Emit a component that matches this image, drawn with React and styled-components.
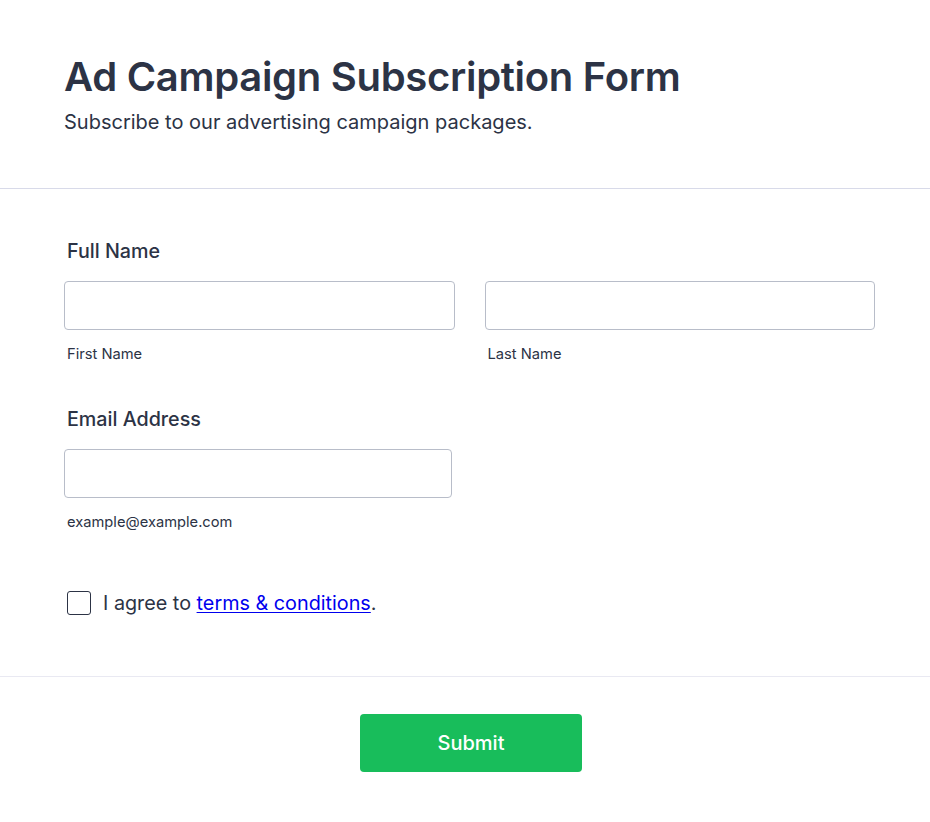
import React from "react";
import styled, { createGlobalStyle } from "styled-components";

const GlobalStyle = createGlobalStyle`
  * { box-sizing: border-box; }
  body {
    margin: 0;
    background: #fff;
    font-family: Inter, "Noto Sans", sans-serif;
    color: #2c3345;
  }
`;

const Page = styled.form`
  width: 930px;
  background: #fff;
`;

const Header = styled.header`
  padding: 53px 64px 54px;
  border-bottom: 1px solid #d8dae9;
`;

const Title = styled.h1`
  margin: 0;
  font-size: 40px;
  line-height: 48px;
  font-weight: 600;
  letter-spacing: -0.3px;
`;

const Subtitle = styled.p`
  margin: 9px 0 0;
  font-size: 20px;
  line-height: 24px;
  font-weight: 400;
`;

const Body = styled.section`
  padding: 50px 55px 61px 64px;
  border-bottom: 1px solid #e9e9f2;
`;

const Field = styled.div`
  margin-bottom: ${({ $gap }) => $gap || 0}px;
`;

const Label = styled.label`
  display: block;
  padding-left: 3px;
  font-size: 19.7px;
  line-height: 24px;
  font-weight: 500;
  margin-bottom: 18px;
`;

const Row = styled.div`
  display: grid;
  grid-template-columns: 1fr 1fr;
  gap: 30px;
`;

const Column = styled.div`
  width: ${({ $width }) => ($width ? `${$width}px` : "auto")};
`;

const Input = styled.input`
  display: block;
  width: 100%;
  height: 49px;
  border: 1px solid #b8bdc9;
  border-radius: 4px;
  padding: 0 12px;
  font: inherit;
  font-size: 16px;
  color: #2c3345;
  background: #fff;
  outline: none;
`;

const Sublabel = styled.span`
  display: block;
  margin-top: 14px;
  padding-left: 3px;
  font-size: 14.7px;
  line-height: 20px;
  color: #2c3345;
`;

const CheckRow = styled.label`
  display: flex;
  align-items: center;
  gap: 12px;
  margin-left: 3px;
  font-size: 19.8px;
  line-height: 24px;
  color: #2c3345;
`;

const Box = styled.input.attrs({ type: "checkbox" })`
  appearance: none;
  margin: 0;
  width: 24px;
  height: 24px;
  border: 1.5px solid #2c3345;
  border-radius: 3px;
  background: #fff;
`;

const Link = styled.a`
  color: #0000ee;
  text-decoration: underline;
  text-underline-offset: 2px;
`;

const Footer = styled.footer`
  display: flex;
  justify-content: center;
  padding: 37px 52px 50px 64px;
`;

const SubmitButton = styled.button`
  width: 222px;
  height: 58px;
  border: none;
  border-radius: 4px;
  background: #18bd5b;
  color: #fff;
  font-family: inherit;
  font-size: 20px;
  font-weight: 500;
  cursor: pointer;
`;

export default function App() {
  return (
    <>
      <GlobalStyle />
      <Page onSubmit={(e) => e.preventDefault()}>
        <Header>
          <Title>Ad Campaign Subscription Form</Title>
          <Subtitle>Subscribe to our advertising campaign packages.</Subtitle>
        </Header>

        <Body>
          <Field $gap={43}>
            <Label>Full Name</Label>
            <Row>
              <Column>
                <Input type="text" />
                <Sublabel>First Name</Sublabel>
              </Column>
              <Column>
                <Input type="text" />
                <Sublabel>Last Name</Sublabel>
              </Column>
            </Row>
          </Field>

          <Field $gap={59}>
            <Label>Email Address</Label>
            <Column $width={388}>
              <Input type="email" />
              <Sublabel>example@example.com</Sublabel>
            </Column>
          </Field>

          <CheckRow>
            <Box />
            <span>
              I agree to <Link href="#">terms &amp; conditions</Link>.
            </span>
          </CheckRow>
        </Body>

        <Footer>
          <SubmitButton type="submit">Submit</SubmitButton>
        </Footer>
      </Page>
    </>
  );
}
